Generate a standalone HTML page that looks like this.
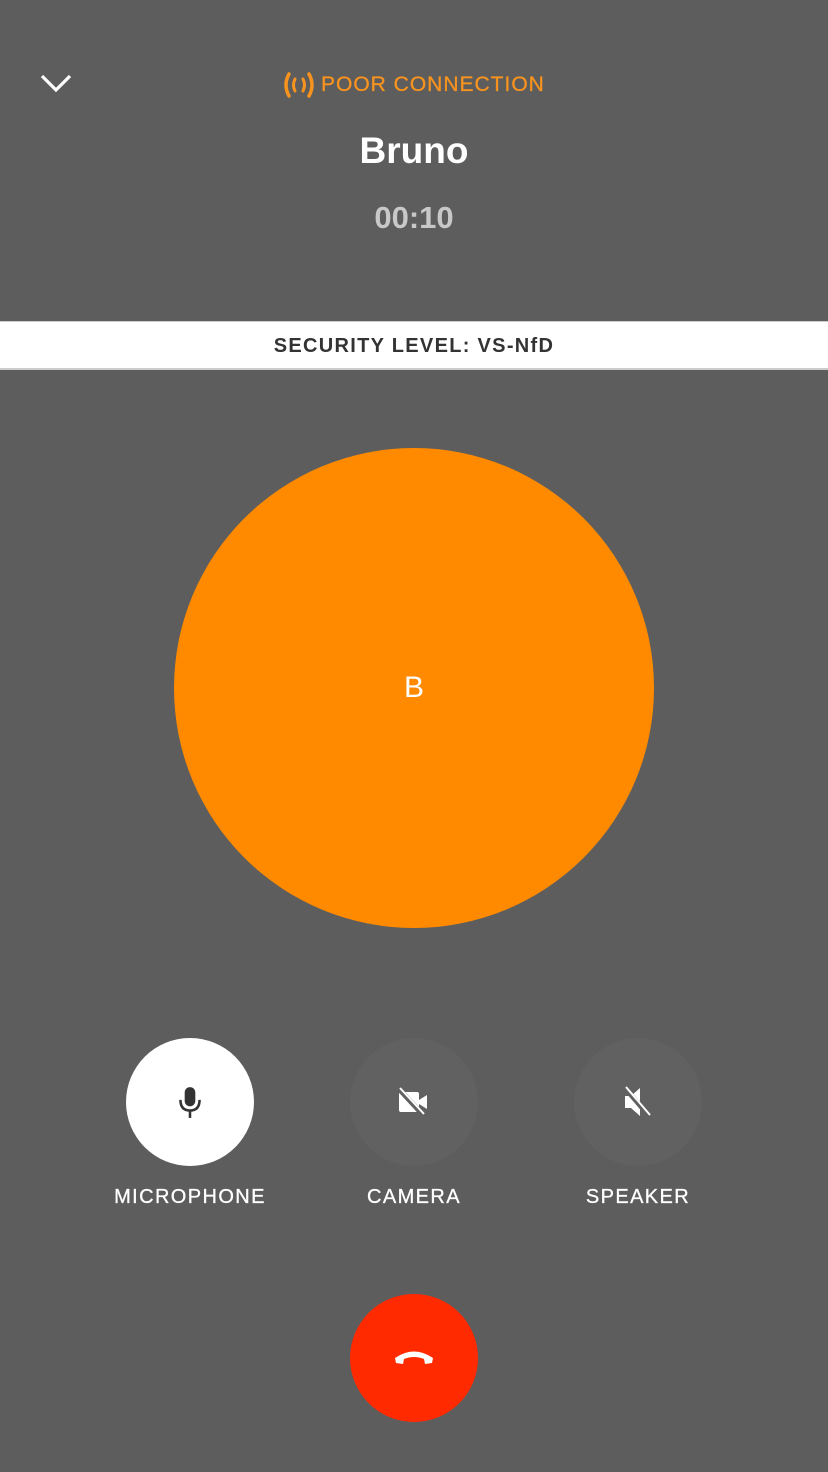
<!DOCTYPE html>
<html><head><meta charset="utf-8"><style>
body{margin:0;width:828px;height:1472px;background:#5d5d5d;font-family:"Liberation Sans",sans-serif;position:relative;overflow:hidden}
.a{position:absolute}
.c{position:absolute;border-radius:50%;width:128px;height:128px;display:flex;align-items:center;justify-content:center}
.l{position:absolute;color:#fff;font-size:20px;width:240px;text-align:center;top:1186px;letter-spacing:1.4px;-webkit-text-stroke:0.3px #fff}
</style></head><body>
<svg class="a" style="left:40px;top:72px" width="32" height="22" viewBox="0 0 32 22"><path d="M2 4 L16 18 L30 4" fill="none" stroke="#fff" stroke-width="3.2"/></svg>
<div class="a" style="left:282px;top:72px;color:#f7931e;font-size:21px;letter-spacing:1px;display:flex;align-items:center;-webkit-text-stroke:0.3px #f7931e">
<svg width="34" height="26" viewBox="0 0 34 26" style="margin-right:5px"><path d="M7 2 Q1 13 7 24" fill="none" stroke="#f7931e" stroke-width="3.5" stroke-linecap="round"/><path d="M27 2 Q33 13 27 24" fill="none" stroke="#f7931e" stroke-width="3.5" stroke-linecap="round"/><path d="M13 7 Q10 13 13 19" fill="none" stroke="#f7931e" stroke-width="3" stroke-linecap="round"/><path d="M21 7 Q24 13 21 19" fill="none" stroke="#f7931e" stroke-width="3" stroke-linecap="round"/></svg>POOR CONNECTION</div>
<div class="a" style="left:0;width:828px;top:130px;text-align:center;color:#fff;font-size:37px;font-weight:bold">Bruno</div>
<div class="a" style="left:0;width:828px;top:200px;text-align:center;color:#c8c8c8;font-size:31px;font-weight:bold">00:10</div>
<div class="a" style="left:0;width:828px;top:321px;height:46px;background:#fff;border-top:1px solid #ccc;border-bottom:2px solid #ccc;text-align:center;line-height:48px;font-size:20px;font-weight:bold;color:#333;letter-spacing:1.3px">SECURITY LEVEL: VS-NfD</div>
<div class="a" style="left:174px;top:448px;width:480px;height:480px;border-radius:50%;background:#ff8a00;display:flex;align-items:center;justify-content:center;color:#fff;font-size:30px">B</div>
<div class="c" style="left:126px;top:1038px;background:#fff"><svg width="26" height="34" viewBox="0 0 24 32"><rect x="7" y="2" width="10" height="18" rx="5" fill="#333"/><path d="M3 14 Q3 24 12 24 Q21 24 21 14" fill="none" stroke="#333" stroke-width="2.4"/><path d="M12 24 V31" stroke="#333" stroke-width="2.4"/></svg></div>
<div class="c" style="left:350px;top:1038px;background:#616161"><svg width="34" height="30" viewBox="0 0 34 30"><rect x="2" y="5" width="20" height="20" rx="2" fill="#fff"/><path d="M22 13 L30 8 V22 L22 17Z" fill="#fff"/><path d="M2 2 L26 28" stroke="#616161" stroke-width="5"/><path d="M3 1 L27 27" stroke="#fff" stroke-width="2"/></svg></div>
<div class="c" style="left:574px;top:1038px;background:#616161"><svg width="34" height="34" viewBox="0 0 34 34"><path d="M4 11 H10 L19 3 V31 L10 23 H4Z" fill="#fff"/><path d="M4 3 L28 31" stroke="#616161" stroke-width="5"/><path d="M5 2 L29 30" stroke="#fff" stroke-width="2"/></svg></div>
<div class="l" style="left:70px">MICROPHONE</div>
<div class="l" style="left:294px">CAMERA</div>
<div class="l" style="left:518px">SPEAKER</div>
<div class="c" style="left:350px;top:1294px;background:#ff2a00"><svg width="42" height="18" viewBox="0 0 42 18"><path d="M3 14 L2 9 Q21 -4 40 9 L39 14 L32 15 L31 10 Q21 6 11 10 L10 15Z" fill="#fff"/></svg></div>
</body></html>
